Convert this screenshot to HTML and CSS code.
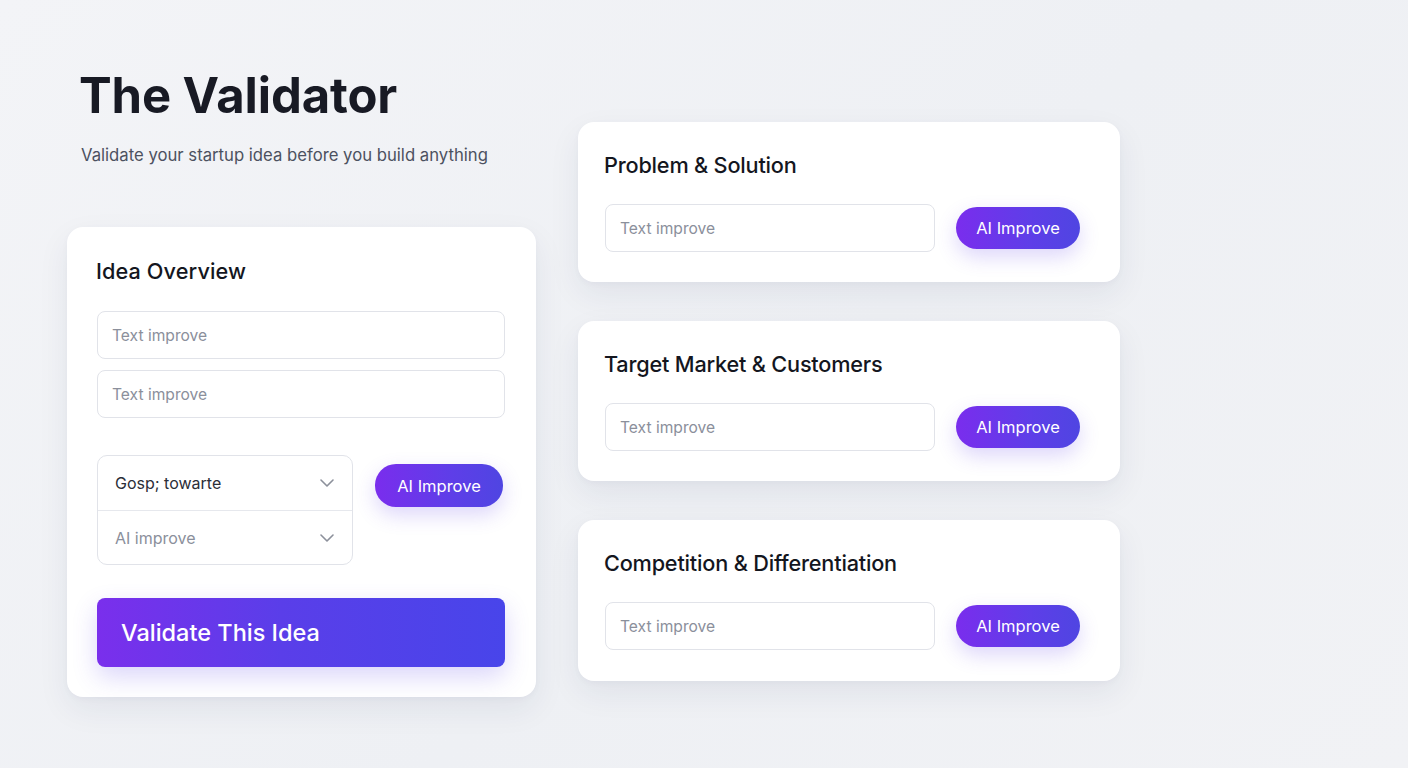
FILE: index.html
```html
<!DOCTYPE html>
<html lang="en">
<head>
<meta charset="utf-8">
<title>The Validator</title>
<link rel="stylesheet" href="styles.css">
</head>
<body>
<main class="page">
  <section class="left">
    <header class="header">
      <h1 class="title">The Validator</h1>
      <p class="subtitle">Validate your startup idea before you build anything</p>
    </header>
    <div class="card card-main">
      <h2 class="card-title">Idea Overview</h2>
      <div class="field">Text improve</div>
      <div class="field field-second">Text improve</div>
      <div class="select-row">
        <div class="select-group">
          <div class="select-item">
            <span class="select-value">Gosp; towarte</span>
            <svg class="chev" viewBox="0 0 14 8" width="14" height="8"><path d="M1 1l6 6 6-6" fill="none" stroke="#8c909b" stroke-width="1.6" stroke-linecap="round" stroke-linejoin="round"/></svg>
          </div>
          <div class="select-item">
            <span class="select-placeholder">AI improve</span>
            <svg class="chev" viewBox="0 0 14 8" width="14" height="8"><path d="M1 1l6 6 6-6" fill="none" stroke="#8c909b" stroke-width="1.6" stroke-linecap="round" stroke-linejoin="round"/></svg>
          </div>
        </div>
        <button class="ai-btn ai-btn-left">AI Improve</button>
      </div>
      <button class="validate-btn">Validate This Idea</button>
    </div>
  </section>
  <section class="right">
    <div class="card card-side">
      <h2 class="card-title">Problem &amp; Solution</h2>
      <div class="side-row">
        <div class="field field-side">Text improve</div>
        <button class="ai-btn">AI Improve</button>
      </div>
    </div>
    <div class="card card-side">
      <h2 class="card-title">Target Market &amp; Customers</h2>
      <div class="side-row">
        <div class="field field-side">Text improve</div>
        <button class="ai-btn">AI Improve</button>
      </div>
    </div>
    <div class="card card-side card-tall">
      <h2 class="card-title">Competition &amp; Differentiation</h2>
      <div class="side-row">
        <div class="field field-side">Text improve</div>
        <button class="ai-btn">AI Improve</button>
      </div>
    </div>
  </section>
</main>
</body>
</html>
```

FILE: styles.css
```css
* { box-sizing: border-box; }
html, body { margin: 0; padding: 0; }
body {
  width: 1408px;
  height: 768px;
  overflow: hidden;
  background: linear-gradient(135deg, #f3f4f7 0%, #eef0f4 55%, #f1f2f5 100%);
  font-family: Inter, "Noto Sans", "Liberation Sans", sans-serif;
  color: #161822;
}
.page {
  display: flex;
  align-items: flex-start;
  gap: 42px;
  padding: 71px 0 0 67px;
}
.left { width: 469px; }
.header { padding-left: 12px; }
.title {
  margin: 0;
  font-size: 49px;
  line-height: 50px;
  font-weight: 700;
  color: #181a24;
  letter-spacing: -0.1px;
}
.subtitle {
  margin: 22px 0 0 2px;
  font-size: 16.7px;
  line-height: 24px;
  color: #4c5160;
}
.card {
  background: #ffffff;
  border-radius: 16px;
  box-shadow: 0 12px 32px rgba(30, 40, 80, 0.07), 0 2px 6px rgba(30, 40, 80, 0.03);
}
.card-main {
  margin-top: 60px;
  padding: 30px 31px 30px 30px;
}
.card-title {
  margin: 0;
  font-size: 21.7px;
  line-height: 28px;
  font-weight: 500;
  color: #14161e;
  letter-spacing: -0.2px;
}
.card-main .card-title { margin-left: -1px; letter-spacing: 0.1px; }
.field {
  height: 48px;
  border: 1px solid #e1e3e9;
  border-radius: 8px;
  padding: 0 14px;
  display: flex;
  align-items: center;
  font-size: 15.6px;
  color: #8b8f9b;
  background: #fff;
}
.card-main .field { margin-top: 26px; }
.card-main .field-second { margin-top: 11px; }
.select-row {
  display: flex;
  align-items: flex-start;
  gap: 22px;
  margin-top: 37px;
}
.select-group {
  width: 256px;
  border: 1px solid #e1e3e9;
  border-radius: 10px;
  overflow: hidden;
}
.select-item {
  height: 54px;
  display: flex;
  align-items: center;
  justify-content: space-between;
  padding: 0 18px 0 17px;
  font-size: 16px;
}
.select-item + .select-item { border-top: 1px solid #e6e8ed; }
.select-value { color: #2b2e38; }
.select-placeholder { color: #8b8f9b; }
.chev { display: block; }
.ai-btn {
  border: 0;
  font-family: inherit;
  font-size: 16.5px;
  font-weight: 400;
  color: #ffffff;
  height: 42px;
  width: 124px;
  border-radius: 21px;
  background: linear-gradient(90deg, #7a2ded 0%, #5e3ee8 60%, #4f45e2 100%);
  box-shadow: 0 8px 20px rgba(100, 70, 230, 0.22);
  padding: 0;
}
.ai-btn-left {
  width: 128px;
  height: 43px;
  margin-top: 9px;
}
.validate-btn {
  display: flex;
  align-items: center;
  width: 100%;
  height: 69px;
  margin-top: 33px;
  border: 0;
  border-radius: 8px;
  padding: 0 24px;
  font-family: inherit;
  font-size: 23.5px;
  font-weight: 500;
  color: #ffffff;
  background: linear-gradient(90deg, #7a2fec 0%, #5a3ee9 45%, #4845ea 100%);
  box-shadow: 0 10px 24px rgba(90, 70, 230, 0.22);
}
.right {
  width: 542px;
  margin-top: 51px;
  display: flex;
  flex-direction: column;
  gap: 39px;
}
.card-side {
  padding: 29px 40px 30px 26px;
}
.side-row {
  display: flex;
  align-items: center;
  gap: 21px;
  margin-top: 25px;
}
.field-side {
  width: 330px;
  margin-left: 1px;
}
.card-tall { padding-bottom: 31px; }
```
